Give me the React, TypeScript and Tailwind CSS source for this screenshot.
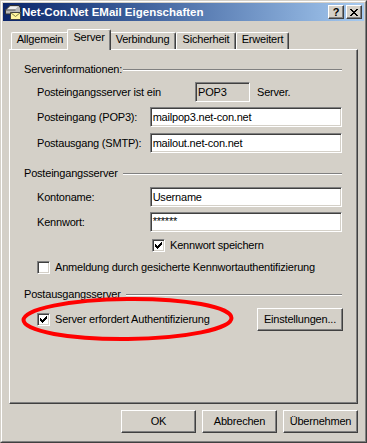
import React from "react";

function CheckMark() {
  return (
    <svg width="7" height="7" viewBox="0 0 7 7" shapeRendering="crispEdges">
      <rect x="6" y="0" width="1" height="1" fill="#000" />
      <rect x="5" y="1" width="2" height="1" fill="#000" />
      <rect x="0" y="2" width="1" height="1" fill="#000" />
      <rect x="4" y="2" width="3" height="1" fill="#000" />
      <rect x="0" y="3" width="2" height="1" fill="#000" />
      <rect x="3" y="3" width="3" height="1" fill="#000" />
      <rect x="0" y="4" width="5" height="1" fill="#000" />
      <rect x="1" y="5" width="3" height="1" fill="#000" />
      <rect x="2" y="6" width="1" height="1" fill="#000" />
    </svg>
  );
}

function Checkbox({ checked }: { checked: boolean }) {
  return (
    <div className="w-[13px] h-[13px] shrink-0 bg-white border border-t-[#808080] border-l-[#808080] border-b-white border-r-white shadow-[inset_1px_1px_#404040,inset_-1px_-1px_#d4d0c8] p-[2px]">
      {checked ? <CheckMark /> : null}
    </div>
  );
}

function Input({ value, small }: { value: string; small?: boolean }) {
  return (
    <div className="w-[193px] h-[20px] bg-white border border-t-[#808080] border-l-[#808080] border-b-white border-r-white shadow-[inset_1px_1px_#404040,inset_-1px_-1px_#d4d0c8] flex items-center pl-[2px]">
      <span className={small ? "leading-[13px] text-[11px] -mt-[2px]" : "leading-[13px]"}>{value}</span>
    </div>
  );
}

function Button({ label, w }: { label: string; w: string }) {
  return (
    <div
      className={`${w} h-[23px] border border-t-white border-l-white border-r-[#404040] border-b-[#404040] shadow-[inset_-1px_-1px_#808080] flex items-center justify-center`}
    >
      <span className="leading-[13px]">{label}</span>
    </div>
  );
}

function GroupHeader({ label, gap }: { label: string; gap: boolean }) {
  return (
    <div className="h-[13px] flex items-center">
      <span className="leading-[13px] whitespace-nowrap">{label}</span>
      <div className={gap ? "ml-[5px] flex-1 h-0 border-t border-t-[#808080] border-b border-b-white" : "ml-[1px] flex-1 h-0 border-t border-t-[#808080] border-b border-b-white"} />
    </div>
  );
}

function Tab({ label, w, selected }: { label: string; w: string; selected?: boolean }) {
  if (selected) {
    return (
      <div
        className={`${w} -mx-[2px] h-[21px] -mb-[1px] relative z-10 bg-[#d4d0c8] border-t border-l border-t-white border-l-white border-r border-r-[#404040] shadow-[inset_-1px_0_#808080] rounded-tl-[2px] rounded-tr-[2px] flex justify-center pt-[1px]`}
      >
        <span className="leading-[13px]">{label}</span>
      </div>
    );
  }
  return (
    <div
      className={`${w} h-[17px] bg-[#d4d0c8] border-t border-l border-t-white border-l-white border-r border-r-[#404040] shadow-[inset_-1px_0_#808080] rounded-tl-[2px] rounded-tr-[2px] flex justify-center`}
    >
      <span className="leading-[13px]">{label}</span>
    </div>
  );
}

export default function App() {
  return (
    <div className="relative w-[367px] h-[443px] bg-[#d4d0c8] border border-t-[#d4d0c8] border-l-[#d4d0c8] border-r-[#404040] border-b-[#404040] font-['Liberation_Sans',Arial,sans-serif] text-[11px] tracking-[-0.2px] text-black select-none">
      <div className="h-full border border-t-white border-l-white border-r-[#808080] border-b-[#808080] p-[1px] flex flex-col">
        {/* Title bar */}
        <div className="h-[18px] shrink-0 bg-gradient-to-r from-[#0a246a] to-[#a6caf0] flex items-center pl-[2px] pr-[2px]">
          <svg width="16" height="16" viewBox="0 0 16 16" className="shrink-0">
            <path d="M0.5 6 L5 1.5 L14 1.5 L15.5 4 L15.5 10 L0.5 10 Z" fill="#b8b8b8" stroke="#303030" />
            <path d="M2 5.5 L5.5 2.5 L13 2.5 L10 5.5 Z" fill="#f0f0f0" />
            <path d="M0.5 6 L10.5 6" stroke="#505050" />
            <rect x="5.5" y="8.5" width="10" height="7" fill="#fff5a0" stroke="#404040" />
            <path d="M5.5 8.5 L10.5 12.5 L15.5 8.5" fill="none" stroke="#808040" />
          </svg>
          <span className="ml-[1px] text-white font-bold text-[11.5px] tracking-normal leading-[14px] whitespace-nowrap">
            Net-Con.Net EMail Eigenschaften
          </span>
          <div className="flex-1" />
          <div className="w-[16px] h-[14px] bg-[#d4d0c8] border border-t-white border-l-white border-r-[#404040] border-b-[#404040] shadow-[inset_-1px_-1px_#808080] flex items-center justify-center">
            <span className="font-bold text-[11px] leading-[11px] tracking-normal">?</span>
          </div>
          <div className="ml-[2px] w-[16px] h-[14px] bg-[#d4d0c8] border border-t-white border-l-white border-r-[#404040] border-b-[#404040] shadow-[inset_-1px_-1px_#808080] flex items-center justify-center">
            <svg width="8" height="7" viewBox="0 0 8 7" shapeRendering="crispEdges">
              <path d="M0 0h2v1h-2zM6 0h2v1h-2zM1 1h2v1h-2zM5 1h2v1h-2zM2 2h4v1h-4zM3 3h2v1h-2zM2 4h4v1h-4zM1 5h2v1h-2zM5 5h2v1h-2zM0 6h2v1h-2zM6 6h2v1h-2z" fill="#000" />
            </svg>
          </div>
        </div>

        {/* Tabs */}
        <div className="mt-[8px] h-[20px] pl-[8px] flex items-end">
          <Tab label="Allgemein" w="w-[58px]" />
          <Tab label="Server" w="w-[44px]" selected />
          <Tab label="Verbindung" w="w-[67px]" />
          <Tab label="Sicherheit" w="w-[60px]" />
          <Tab label="Erweitert" w="w-[53px]" />
        </div>

        {/* Panel */}
        <div className="ml-[6px] w-[349px] h-[355px] border-t border-l border-t-white border-l-white border-r border-b border-r-[#404040] border-b-[#404040] shadow-[inset_-1px_-1px_#808080] flex flex-col pl-[14px]">
          <div className="w-[318px] flex flex-col">
            {/* Group 1 */}
            <div className="mt-[13px]">
              <GroupHeader label="Serverinformationen:" gap={false} />
            </div>
            <div className="mt-[6px] h-[20px] flex items-center pl-[13px]">
              <span className="w-[158px] leading-[13px]">Posteingangsserver ist ein</span>
              <div className="w-[55px] h-[20px] bg-[#d4d0c8] border border-t-[#808080] border-l-[#808080] border-b-white border-r-white shadow-[inset_1px_1px_#404040,inset_-1px_-1px_#d4d0c8] flex items-center pl-[2px]">
                <span className="leading-[13px]">POP3</span>
              </div>
              <span className="ml-[7px] leading-[13px]">Server.</span>
            </div>
            <div className="mt-[5px] h-[20px] flex items-center pl-[13px]">
              <span className="w-[113px] leading-[13px]">Posteingang (POP3):</span>
              <Input value="mailpop3.net-con.net" />
            </div>
            <div className="mt-[6px] h-[20px] flex items-center pl-[13px]">
              <span className="w-[113px] leading-[13px]">Postausgang (SMTP):</span>
              <Input value="mailout.net-con.net" />
            </div>

            {/* Group 2 */}
            <div className="mt-[14px]">
              <GroupHeader label="Posteingangsserver" gap={true} />
            </div>
            <div className="mt-[7px] h-[20px] flex items-center pl-[13px]">
              <span className="w-[113px] leading-[13px]">Kontoname:</span>
              <Input value="Username" />
            </div>
            <div className="mt-[5px] h-[20px] flex items-center pl-[13px]">
              <span className="w-[113px] leading-[13px]">Kennwort:</span>
              <Input value="******" small />
            </div>
            <div className="mt-[7px] h-[13px] flex items-center pl-[128px]">
              <Checkbox checked />
              <span className="ml-[5px] leading-[13px]">Kennwort speichern</span>
            </div>
            <div className="mt-[9px] h-[13px] flex items-center pl-[13px]">
              <Checkbox checked={false} />
              <span className="ml-[5px] leading-[13px] whitespace-nowrap">Anmeldung durch gesicherte Kennwortauthentifizierung</span>
            </div>

            {/* Group 3 */}
            <div className="mt-[14px]">
              <GroupHeader label="Postausgangsserver" gap={true} />
            </div>
            <div className="mt-[7px] h-[23px] flex items-center pl-[13px]">
              <Checkbox checked />
              <span className="ml-[5px] leading-[13px] whitespace-nowrap">Server erfordert Authentifizierung</span>
              <div className="flex-1" />
              <div className="-mr-[1px]">
                <Button label="Einstellungen..." w="w-[86px]" />
              </div>
            </div>
          </div>
        </div>

        {/* Bottom buttons */}
        <div className="mt-[6px] ml-[118px] flex gap-[6px]">
          <Button label="OK" w="w-[75px]" />
          <Button label="Abbrechen" w="w-[75px]" />
          <Button label="Übernehmen" w="w-[75px]" />
        </div>
      </div>

      {/* Red annotation ellipse */}
      <svg className="absolute left-[16px] top-[292px] pointer-events-none" width="222" height="52" viewBox="0 0 222 52">
        <ellipse cx="110.5" cy="26" rx="104" ry="20" fill="none" stroke="#ff0000" strokeWidth="4" transform="rotate(-0.6 110.5 26)" />
      </svg>
    </div>
  );
}
